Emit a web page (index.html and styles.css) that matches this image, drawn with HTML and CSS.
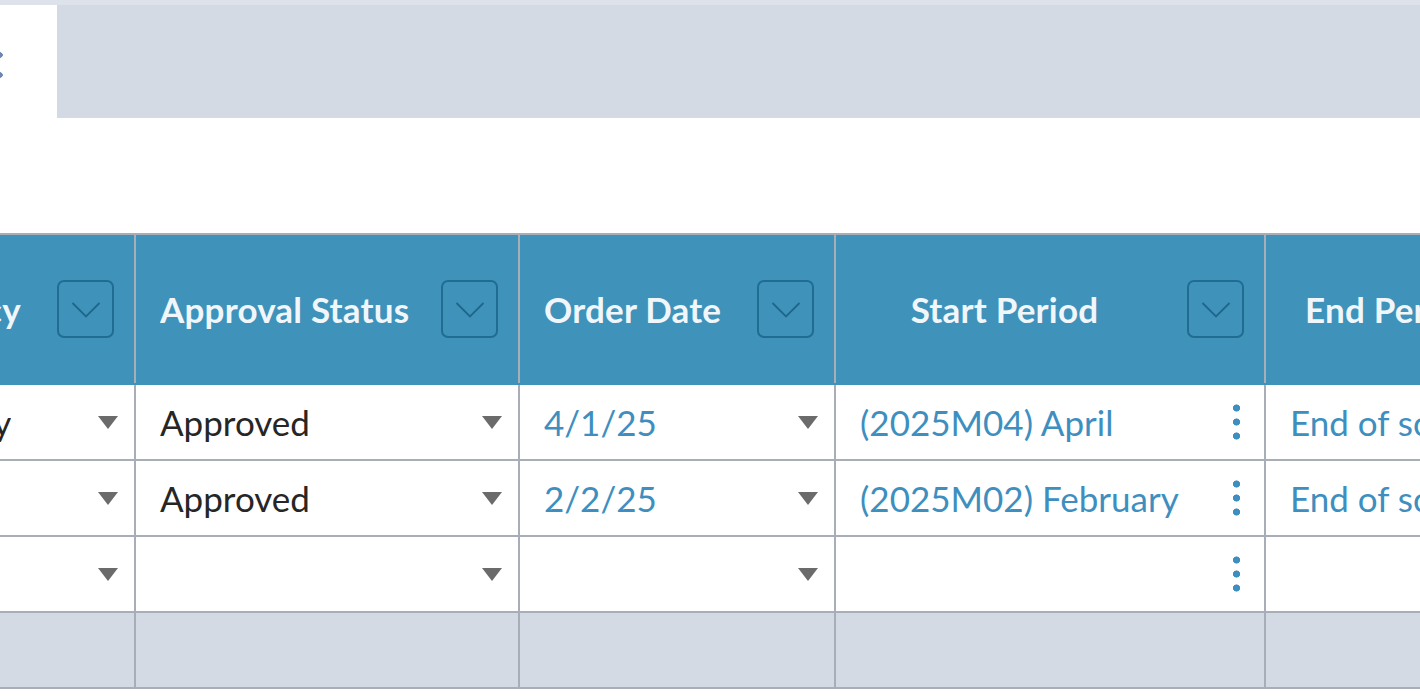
FILE: index.html
```html
<!DOCTYPE html>
<html lang="en">

<head>
    <meta charset="UTF-8">
    <meta name="viewport" content="width=device-width, initial-scale=1.0">
    <title>Orders</title>
    <link rel="stylesheet" href="styles.css">
</head>

<body>
    <div class="top-strip"></div>

    <div class="tabs">
        <div class="tab tab-active"><span class="tab-mark"></span></div>
        <div class="tab-rest"></div>
    </div>

    <div class="toolbar-space"></div>

    <div class="grid-scroll">
        <table class="grid">
            <colgroup>
                <col class="col-freq">
                <col class="col-status">
                <col class="col-date">
                <col class="col-start">
                <col class="col-end">
            </colgroup>
            <thead>
                <tr>
                    <th>
                        <div class="head-cell">
                            <span class="head-title">Frequency</span>
                            <button class="filter-btn"><svg viewBox="0 0 24 24"><path d="M3 8l9 9 9-9"/></svg></button>
                        </div>
                    </th>
                    <th>
                        <div class="head-cell">
                            <span class="head-title">Approval Status</span>
                            <button class="filter-btn"><svg viewBox="0 0 24 24"><path d="M3 8l9 9 9-9"/></svg></button>
                        </div>
                    </th>
                    <th>
                        <div class="head-cell">
                            <span class="head-title">Order Date</span>
                            <button class="filter-btn"><svg viewBox="0 0 24 24"><path d="M3 8l9 9 9-9"/></svg></button>
                        </div>
                    </th>
                    <th>
                        <div class="head-cell">
                            <span class="head-title centered">Start Period</span>
                            <button class="filter-btn"><svg viewBox="0 0 24 24"><path d="M3 8l9 9 9-9"/></svg></button>
                        </div>
                    </th>
                    <th>
                        <div class="head-cell">
                            <span class="head-title end-title">End Period</span>
                            <button class="filter-btn"><svg viewBox="0 0 24 24"><path d="M3 8l9 9 9-9"/></svg></button>
                        </div>
                    </th>
                </tr>
            </thead>
            <tbody>
                <tr>
                    <td><div class="cell first"><span>Quarterly</span><i class="caret"></i></div></td>
                    <td><div class="cell"><span>Approved</span><i class="caret"></i></div></td>
                    <td><div class="cell link"><span>4/1/25</span><i class="caret"></i></div></td>
                    <td><div class="cell link"><span>(2025M04) April</span><i class="kebab"></i></div></td>
                    <td><div class="cell link"><span>End of schedule</span><i class="kebab"></i></div></td>
                </tr>
                <tr>
                    <td><div class="cell first"><span></span><i class="caret"></i></div></td>
                    <td><div class="cell"><span>Approved</span><i class="caret"></i></div></td>
                    <td><div class="cell link"><span>2/2/25</span><i class="caret"></i></div></td>
                    <td><div class="cell link"><span>(2025M02) February</span><i class="kebab"></i></div></td>
                    <td><div class="cell link"><span>End of schedule</span><i class="kebab"></i></div></td>
                </tr>
                <tr>
                    <td><div class="cell first"><span></span><i class="caret"></i></div></td>
                    <td><div class="cell"><span></span><i class="caret"></i></div></td>
                    <td><div class="cell"><span></span><i class="caret"></i></div></td>
                    <td><div class="cell"><span></span><i class="kebab"></i></div></td>
                    <td><div class="cell"><span></span></div></td>
                </tr>
                <tr class="total-row">
                    <td></td>
                    <td></td>
                    <td></td>
                    <td></td>
                    <td></td>
                </tr>
            </tbody>
        </table>
    </div>
</body>

</html>
```

FILE: styles.css
```css
body {
    margin: 0;
    background-color: #ffffff;
    font-family: Lato, "Open Sans", sans-serif;
    overflow: hidden;
}

.top-strip {
    height: 5px;
    background-color: #dde2eb;
}

.tabs {
    display: flex;
    height: 113px;
}

.tab-active {
    width: 57px;
    background-color: #ffffff;
    position: relative;
}

/* what is left of the tab label, cut by the window edge */
.tab-mark {
    position: absolute;
    left: -3px;
    top: 47px;
    width: 6px;
    height: 26px;
    background:
        radial-gradient(circle at 3px 3px, #6d86b3 2.5px, transparent 3px) 0 0 / 6px 20px no-repeat,
        radial-gradient(circle at 3px 3px, #6d86b3 2.5px, transparent 3px) 0 20px / 6px 6px no-repeat;
}

.tab-rest {
    flex: 1;
    background-color: #d3dae4;
}

.toolbar-space {
    height: 115px;
}

.grid-scroll {
    overflow: hidden;
}

.grid {
    border-collapse: collapse;
    table-layout: fixed;
    width: 1740px;
    margin-left: -170px;
}

.col-freq {
    width: 304px;
}

.col-status {
    width: 384px;
}

.col-date {
    width: 316px;
}

.col-start {
    width: 430px;
}

.col-end {
    width: 306px;
}

.grid th,
.grid td {
    border: 2px solid #a7aeb8;
    padding: 0;
}

.grid th {
    height: 148px;
    background-color: #3f92ba;
    border-color: #a7aeb8 #a7aeb8 #3f92ba #a7aeb8;
}

.head-cell {
    display: flex;
    align-items: center;
    padding: 0 20px 0 24px;
}

.head-title {
    flex: 1;
    color: #f1f6fa;
    font-size: 35px;
    font-weight: 700;
    text-align: left;
    white-space: nowrap;
    overflow: hidden;
    letter-spacing: 0.2px;
}

.head-title.centered {
    text-align: center;
    padding-right: 38px;
}

.head-title.end-title {
    padding-left: 15px;
}

.filter-btn {
    width: 57px;
    height: 58px;
    padding: 0;
    border: 2px solid #216c92;
    border-radius: 7px;
    background-color: transparent;
    display: flex;
    align-items: center;
    justify-content: center;
    flex-shrink: 0;
}

.filter-btn svg {
    width: 36px;
    height: 36px;
    fill: none;
    stroke: #1f678c;
    stroke-width: 1.2;
}

.grid td {
    height: 74px;
    background-color: #ffffff;
}

.cell {
    display: flex;
    align-items: center;
    justify-content: space-between;
    padding: 0 16px 0 24px;
    font-size: 35px;
    color: #262626;
    white-space: nowrap;
}

.cell.first {
    padding-left: 32px;
}

.cell span {
    overflow: hidden;
}

.cell.link {
    color: #3e8fbf;
}

.caret {
    width: 0;
    height: 0;
    border-left: 10px solid transparent;
    border-right: 10px solid transparent;
    border-top: 13px solid #6b6b6b;
    flex-shrink: 0;
}

.kebab {
    width: 7px;
    height: 42px;
    margin-right: 8px;
    flex-shrink: 0;
    background: radial-gradient(circle, #3e8fbf 3.3px, transparent 3.8px) 0 0 / 7px 14px repeat-y;
}

.total-row td {
    background-color: #d3dae4;
}
```
